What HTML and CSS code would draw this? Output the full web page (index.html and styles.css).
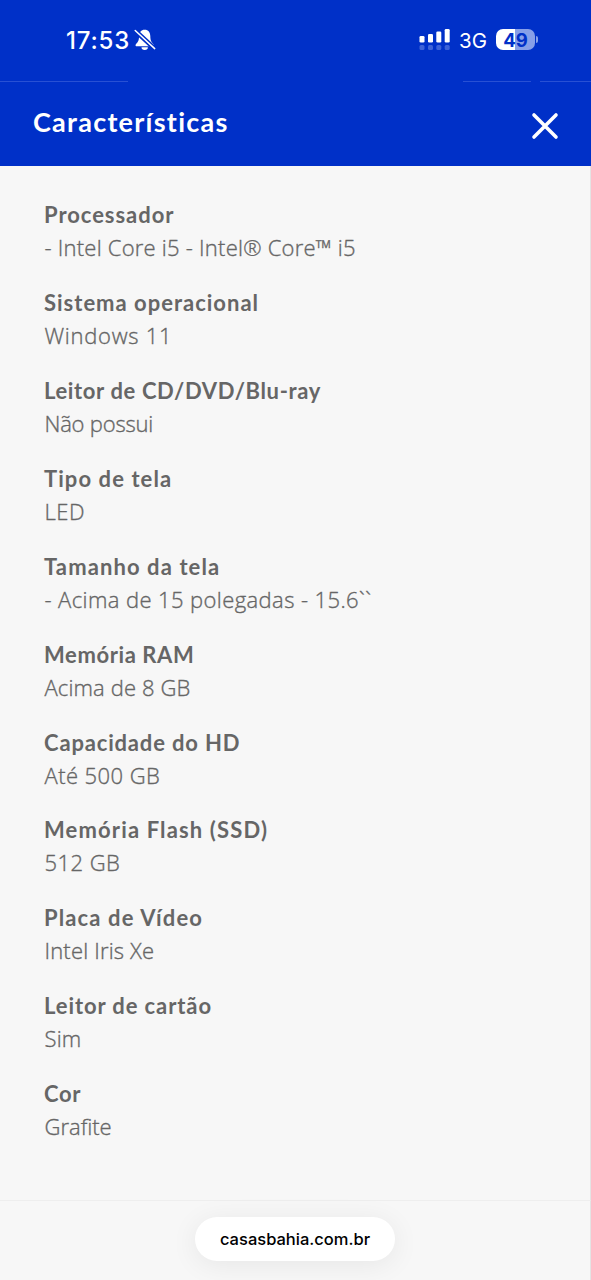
FILE: index.html
```html
<!DOCTYPE html>
<html lang="pt-BR">
<head>
<meta charset="utf-8">
<title>Características</title>
<link rel="stylesheet" href="styles.css">
</head>
<body>
<div class="screen">
  <div class="status">
    <span class="time">17:53</span>
    <svg class="bell" viewBox="0 0 22 24" width="22" height="24">
      <path d="M10.7 1.7C7 1.7 5.2 4.3 5.1 8c-.1 5.200-1.500 6.300-3.200 8.200-.8 1-.3 2.100 1 2.100h15.500c1.400 0 1.900-1.100 1-2.100-1.700-1.900-3-3-3.100-8.200C16.200 4.300 14.400 1.700 10.700 1.700Z" fill="#fff"/>
      <path d="M7.500 19.300h6.400a3.200 2.700 0 0 1-6.400 0Z" fill="#fff"/>
      <path d="M1 2.500 20.500 20.500" stroke="#0030c8" stroke-width="4.500"/>
      <path d="M1.200 2.500 20.700 20.600" stroke="#fff" stroke-width="1.500" stroke-linecap="round"/>
    </svg>
    <svg class="signal" viewBox="0 0 32 22" width="32" height="22">
      <g fill="#fff"><rect x=".5" y="7" width="5" height="6.500" rx="1.300"/><rect x="9" y="5" width="5" height="8.500" rx="1.300"/><rect x="17.300" y="2.500" width="5" height="11" rx="1.300"/><rect x="25.700" y="0" width="5" height="13.500" rx="1.300"/></g>
      <g fill="#3d62d8"><rect x=".5" y="16" width="5" height="5" rx="1.500"/><rect x="9" y="16" width="5" height="5" rx="1.500"/><rect x="17.300" y="16" width="5" height="5" rx="1.500"/><rect x="25.700" y="16" width="5" height="5" rx="1.500"/></g>
    </svg>
    <span class="network">3G</span>
    <span class="battery"><span class="level">49</span><span class="cap"></span></span>
  </div>
  <div class="rules"><i class="rule left"></i><i class="rule mid"></i><i class="rule right"></i></div>
  <header class="header">
    <h1 class="title">Características</h1>
    <svg class="close" viewBox="0 0 28 28" width="28" height="28"><path d="M3 3 25 25M25 3 3 25" stroke="#fff" stroke-width="3.600" stroke-linecap="round"/></svg>
  </header>
  <dl class="specs">
    <div class="spec processor"><dt>Processador</dt><dd>- Intel Core i5 - Intel® Core™ i5</dd></div>
    <div class="spec system"><dt>Sistema operacional</dt><dd>Windows 11</dd></div>
    <div class="spec disc"><dt>Leitor de CD/DVD/Blu-ray</dt><dd>Não possui</dd></div>
    <div class="spec panel"><dt>Tipo de tela</dt><dd>LED</dd></div>
    <div class="spec size"><dt>Tamanho da tela</dt><dd>- Acima de 15 polegadas - 15.6``</dd></div>
    <div class="spec ram"><dt>Memória RAM</dt><dd>Acima de 8 GB</dd></div>
    <div class="spec drive"><dt>Capacidade do HD</dt><dd>Até 500 GB</dd></div>
    <div class="spec flash"><dt>Memória Flash (SSD)</dt><dd>512 GB</dd></div>
    <div class="spec video"><dt>Placa de Vídeo</dt><dd>Intel Iris Xe</dd></div>
    <div class="spec card"><dt>Leitor de cartão</dt><dd>Sim</dd></div>
    <div class="spec color"><dt>Cor</dt><dd>Grafite</dd></div>
  </dl>
  <footer class="footer"><div class="address">casasbahia.com.br</div></footer>
</div>
</body>
</html>
```
FILE: styles.css
```css
* { box-sizing: border-box; }
body { margin: 0; background: #f7f7f7; }
.screen { width: 591px; height: 1280px; display: flex; flex-direction: column; overflow: hidden; background: #f7f7f7; }
.status { height: 80px; background: #0030c8; color: #fff; display: flex; align-items: flex-start; padding: 0 0 0 66px; font-family: Inter, sans-serif; }
.time { width: 68px; margin-top: 26px; font-size: 24px; line-height: 30px; font-weight: 550; letter-spacing: .8px; white-space: nowrap; }
.bell { margin-top: 28px; }
.signal { margin: 29px 0 0 263px; }
.network { width: 37px; margin: 27px 0 0 8px; font-size: 20.5px; line-height: 28px; font-weight: 400; }
.battery { margin-top: 29px; display: flex; align-items: center; gap: 1px; }
.level { width: 39px; height: 21px; border-radius: 7px; background: linear-gradient(90deg, #fff 50%, #879fe8 50%); color: #0030c8; font-size: 18.5px; line-height: 22px; font-weight: 650; text-align: center; }
.cap { width: 2px; height: 7px; border-radius: 0 2px 2px 0; background: #879fe8; }
.rules { height: 2px; background: #0030c8; display: flex; padding-top: 1px; }
.rule { height: 1px; background: #2850d4; }
.left { width: 128px; }
.mid { width: 68px; margin-left: 335px; }
.right { width: 51px; margin-left: 9px; }
.header { height: 84px; background: #0030c8; color: #fff; display: flex; justify-content: space-between; padding: 0 32px 0 33px; }
.title { margin: 20px 0 0; font: 700 27px/40px Lato, sans-serif; letter-spacing: 1.25px; }
.close { margin: 30px 0 0; }
.specs { margin: 0; height: 1034px; padding: 32.2px 44px 0; color: #666; font: 22px/33px Lato, sans-serif; border-right: 1px solid #e4e4e4; }
.spec { height: 87.9px; white-space: nowrap; }
.specs dt { height: 33px; font-weight: 700; letter-spacing: .95px; }
.specs dd { margin: 0; height: 33px; padding-left: .5px; font-family: "Open Sans", sans-serif; font-weight: 300; -webkit-text-stroke: .35px #666; }
.specs .processor dd { letter-spacing: .23px; }
.specs .system dt { letter-spacing: 1px; }
.specs .system dd { letter-spacing: .72px; }
.specs .disc dt { letter-spacing: .63px; }
.specs .disc dd { letter-spacing: -.2px; }
.specs .panel dt { letter-spacing: 1.08px; }
.specs .panel dd { letter-spacing: .5px; }
.specs .size dt { letter-spacing: 1.1px; }
.specs .size dd { letter-spacing: .4px; }
.specs .ram dt { letter-spacing: .6px; }
.specs .ram dd { letter-spacing: .13px; }
.specs .drive dt { letter-spacing: .83px; }
.specs .drive dd { letter-spacing: .43px; }
.specs .flash dt { letter-spacing: 1.14px; }
.specs .flash dd { letter-spacing: .45px; }
.specs .video dt { letter-spacing: 1.13px; }
.specs .video dd { letter-spacing: .17px; }
.specs .card dt { letter-spacing: .9px; }
.specs .card dd { letter-spacing: .2px; }
.specs .color dt { letter-spacing: .6px; }
.footer { height: 80px; border-top: 1px solid #eee; border-right: 1px solid #e4e4e4; padding-top: 16px; display: flex; justify-content: center; align-items: flex-start; }
.address { width: 200px; height: 44px; border-radius: 22px; background: #fff; box-shadow: 0 4px 28px rgba(0, 0, 0, .07); color: #000; font: 500 16.5px/44px Inter, sans-serif; text-align: center; }
```
